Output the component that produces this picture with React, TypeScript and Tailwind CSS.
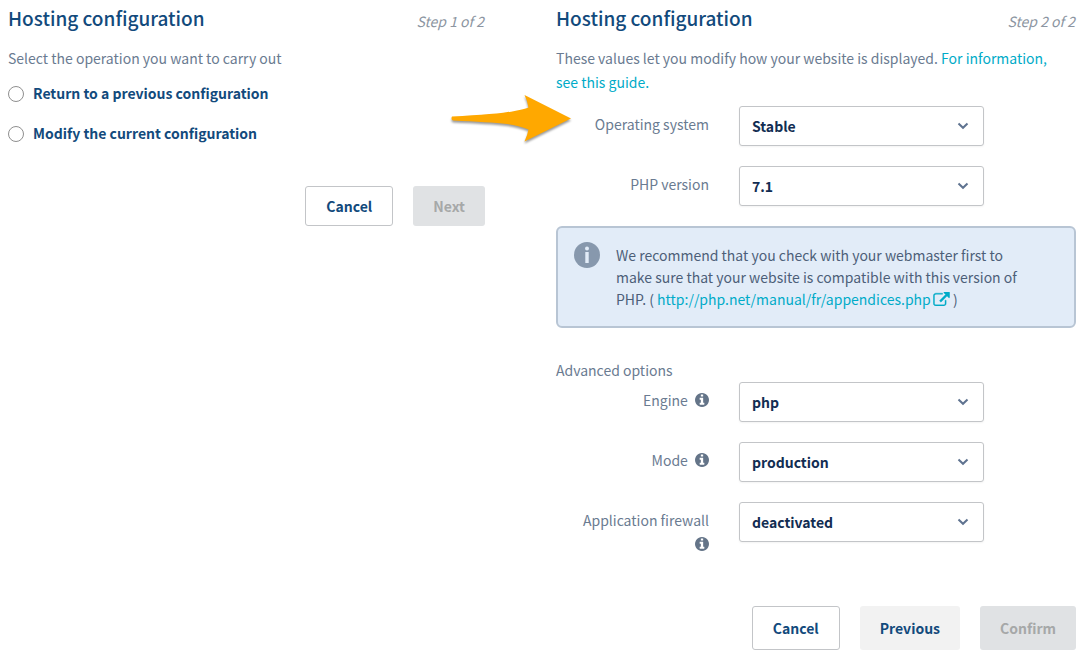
import { useId } from "react";
import type { ReactNode } from "react";

function InfoGlyph() {
  return (
    <svg
      viewBox="0 0 1536 1536"
      role="img"
      aria-label="More information"
      className="ml-1 inline-block size-3.5 fill-[#647488] align-[-1px]"
    >
      <path d="M1024 1248v-160q0-14-9-23t-23-9h-96V544q0-14-9-23t-23-9H544q-14 0-23 9t-9 23v160q0 14 9 23t23 9h96v320h-96q-14 0-23 9t-9 23v160q0 14 9 23t23 9h448q14 0 23-9t9-23zM896 352V192q0-14-9-23t-23-9H672q-14 0-23 9t-9 23v160q0 14 9 23t23 9h192q14 0 23-9t9-23zm640 416q0 209-103 385.500T1153.500 1433 768 1536t-385.500-103T103 1153.500 0 768t103-385.500T382.500 103 768 0t385.500 103T1433 382.500 1536 768z" />
    </svg>
  );
}

function ExternalLinkIcon() {
  return (
    <svg
      viewBox="0 0 1792 1536"
      aria-hidden="true"
      className="ml-0.5 inline-block h-3.5 w-[17px] fill-current stroke-current align-[-1px] [stroke-width:40]"
    >
      <path d="M1408 928v320q0 119-84.500 203.500T1120 1536H288q-119 0-203.500-84.500T0 1248V416q0-119 84.500-203.500T288 128h704q14 0 23 9t9 23v64q0 14-9 23t-23 9H288q-66 0-113 47t-47 113v832q0 66 47 113t113 47h832q66 0 113-47t47-113V928q0-14 9-23t23-9h64q14 0 23 9t9 23zm384-864v512q0 26-19 45t-45 19-45-19l-176-176-652 652q-10 10-23 10t-23-10L695 983q-10-10-10-23t10-23l652-652-176-176q-19-19-19-45t19-45 45-19h512q26 0 45 19t19 45z" />
    </svg>
  );
}

function PanelHeader({ step }: { step: number }) {
  return (
    <header className="flex items-center justify-between">
      <h2 className="text-[19px] leading-7 font-medium text-[#124a7c]">Hosting configuration</h2>
      <span className="pt-1.5 pr-px text-sm text-[#8c95a1] italic">Step {step} of 2</span>
    </header>
  );
}

function RadioOption({ children }: { children: ReactNode }) {
  return (
    <label className="flex items-center gap-[9px] leading-6 font-bold text-[#124a7c]">
      <input
        type="radio"
        name="operation"
        className="mt-0.5 size-4 appearance-none rounded-full border border-[#8f8f8f] bg-white checked:border-[5px] checked:border-[#124a7c]"
      />
      {children}
    </label>
  );
}

function SelectField({ label, info, options }: { label: string; info?: boolean; options: string[] }) {
  const id = useId();
  return (
    <div className="grid grid-cols-[153fr_245fr_62fr] gap-x-[30px]">
      <label htmlFor={id} className="-mb-2 pt-1.5 pl-3 text-right leading-6">
        {label}
        {info && (
          <>
            {" "}
            <InfoGlyph />
          </>
        )}
      </label>
      <div className="relative h-10">
        <select
          id={id}
          className="h-10 w-full appearance-none rounded-[3px] border border-[#c3c5c8] bg-white pr-8 pl-3 font-bold text-[#122d52] shadow-xs"
        >
          {options.map((o) => (
            <option key={o}>{o}</option>
          ))}
        </select>
        <svg
          viewBox="0 0 12 8"
          aria-hidden="true"
          className="pointer-events-none absolute top-4 right-[15px] h-2 w-3 fill-none stroke-[#5f7390] stroke-2"
        >
          <path d="M1.500 1.500 6 5.800 10.500 1.500" />
        </svg>
      </div>
    </div>
  );
}

function Button({ kind, children }: { kind: "outline" | "soft" | "disabled"; children: ReactNode }) {
  const look = {
    outline: "border border-[#c3c5c8] bg-white text-[#124a7c]",
    soft: "bg-[#f2f2f2] text-[#124a7c]",
    disabled: "bg-[#e0e2e4] text-[#a6a8a8]",
  }[kind];
  return (
    <button type="button" disabled={kind === "disabled"} className={"rounded-[3px] px-5 font-bold " + look}>
      {children}
    </button>
  );
}

export default function App() {
  return (
    <main className="grid min-h-screen grid-cols-[477fr_520fr] gap-x-[71px] bg-white pt-1 pr-1 pl-2 font-['Noto_Sans_CJK_SC',sans-serif] text-sm text-[#6a7b91]">
      <section>
        <PanelHeader step={1} />
        <p className="mt-3.5 leading-6">Select the operation you want to carry out</p>
        <div className="mt-[11px] flex flex-col gap-4">
          <RadioOption>Return to a previous configuration</RadioOption>
          <RadioOption>Modify the current configuration</RadioOption>
        </div>
        <div className="mt-[41px] flex h-10 justify-end gap-5">
          <Button kind="outline">Cancel</Button>
          <Button kind="disabled">Next</Button>
        </div>
      </section>

      <section>
        <PanelHeader step={2} />
        <p className="mt-3.5 pr-3 leading-6">
          These values let you modify how your website is displayed.{" "}
          <a href="#guide" className="text-[#00abc8]">
            For information, see this guide.
          </a>
        </p>

        <div className="relative mt-3 flex flex-col gap-5">
          <svg
            viewBox="0 0 124 52"
            aria-hidden="true"
            className="absolute -top-3 -left-[107px] h-[52px] w-[124px] drop-shadow-[0_2px_1px_rgba(0,0,0,0.4)]"
          >
            <path
              fill="#ffa800"
              d="M3 22.500Q50 20.500 68 16.500 76 15 79.500 13.500Q78.500 7 75.500 1L122 24.500 75.500 47.500Q78.500 41 79.500 35.500 70 31.500 58 30 40 28 4 26.500Q2.500 26 2.500 24.500 2.500 23 3 22.500Z"
            />
          </svg>
          <SelectField label="Operating system" options={["Stable", "Beta", "Legacy"]} />
          <SelectField label="PHP version" options={["7.1", "7.0", "5.6"]} />
        </div>

        <div className="mt-5 flex gap-4 rounded-md border-2 border-[#b8c5d4] bg-[#e2ecf8] p-4 text-[#4d5f78]">
          <svg viewBox="0 0 26 26" aria-hidden="true" className="-mt-0.5 size-[26px] shrink-0">
            <circle cx="13" cy="13" r="13" fill="#8798ad" />
            <circle cx="13" cy="6.500" r="2" fill="#e2ecf8" />
            <path d="M11.300 10h3.400v11h-3.400z" fill="#e2ecf8" />
          </svg>
          <p className="pr-5 leading-[22px]">
            We recommend that you check with your webmaster first to make sure that your website is compatible with
            this version of PHP. ({" "}
            <a href="http://php.net/manual/fr/appendices.php" className="text-[#00abc8]">
              http://php.net/manual/fr/appendices.php
              <ExternalLinkIcon />
            </a>{" "}
            )
          </p>
        </div>

        <h3 className="mt-[30px] leading-6">Advanced options</h3>
        <div className="flex flex-col gap-5">
          <SelectField label="Engine" info options={["php", "phpcgi"]} />
          <SelectField label="Mode" info options={["production", "development"]} />
          <SelectField label="Application firewall" info options={["deactivated", "activated"]} />
        </div>

        <div className="mt-[58px] flex h-11 justify-end gap-5">
          <Button kind="outline">Cancel</Button>
          <Button kind="soft">Previous</Button>
          <Button kind="disabled">Confirm</Button>
        </div>
      </section>
    </main>
  );
}
